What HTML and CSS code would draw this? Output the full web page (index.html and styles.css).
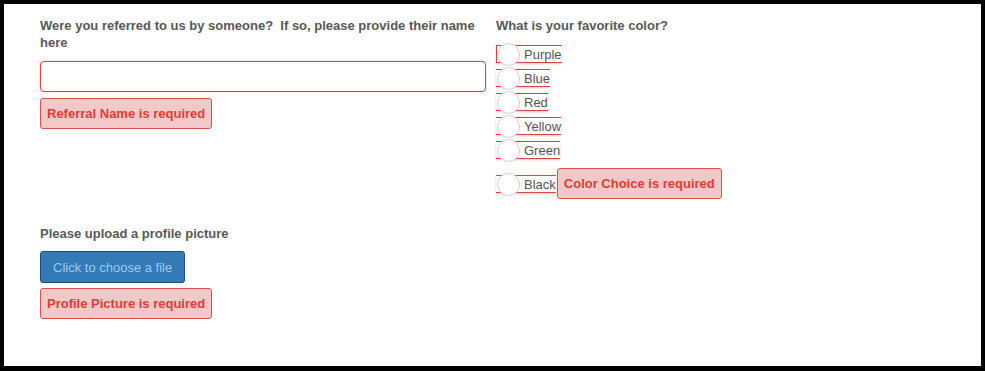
FILE: index.html
```html
<!DOCTYPE html>
<html lang="en">
<head>
<meta charset="utf-8">
<title>Form</title>
<link rel="stylesheet" href="styles.css">
</head>
<body>
<div class="frame">
  <form class="form">
    <div class="field">
      <label class="label">Were you referred to us by someone?&nbsp; If so, please provide their name here</label>
      <input class="text-input" type="text">
      <div class="error">Referral Name is required</div>
    </div>
    <div class="field">
      <div class="label">What is your favorite color?</div>
      <div class="options">
        <div class="row"><span class="opt first"><span class="dot"></span><span class="opt-text">Purple</span></span></div>
        <div class="row"><span class="opt"><span class="dot"></span><span class="opt-text">Blue</span></span></div>
        <div class="row"><span class="opt"><span class="dot"></span><span class="opt-text">Red</span></span></div>
        <div class="row"><span class="opt"><span class="dot"></span><span class="opt-text">Yellow</span></span></div>
        <div class="row"><span class="opt"><span class="dot"></span><span class="opt-text">Green</span></span></div>
        <div class="row last"><span class="opt"><span class="dot"></span><span class="opt-text">Black</span></span><div class="error">Color Choice is required</div></div>
      </div>
    </div>
    <div class="field">
      <div class="label">Please upload a profile picture</div>
      <div class="file-btn">Click to choose a file</div>
      <div class="error error-file">Profile Picture is required</div>
    </div>
  </form>
</div>
</body>
</html>
```
FILE: styles.css
```css
html, body {
  margin: 0;
  padding: 0;
  background: #000;
}
.frame {
  box-sizing: border-box;
  width: 985px;
  height: 371px;
  border-style: solid;
  border-color: #000;
  border-width: 4px 4px 5px 4px;
  background: #fff;
  padding: 13px 0 0 36px;
  font-family: "Liberation Sans", Arial, Helvetica, sans-serif;
  font-size: 13px;
  line-height: 17px;
  color: #555;
}
.form {
  display: grid;
  grid-template-columns: 446px 400px;
  column-gap: 10px;
  row-gap: 26px;
  align-items: start;
}
.field {
  display: flex;
  flex-direction: column;
  align-items: flex-start;
}
.label {
  display: block;
  font-weight: bold;
  color: #585858;
}
.text-input {
  box-sizing: border-box;
  width: 446px;
  height: 31px;
  margin: 10px 0 0 0;
  border: 1px solid #e0433d;
  border-radius: 4px;
  box-shadow: 0 0 2px rgba(224, 67, 61, 0.35);
  background: #fff;
  font: inherit;
  outline: none;
}
.error {
  box-sizing: border-box;
  margin-top: 6px;
  padding: 6px 6px;
  border: 1px solid #e0504b;
  border-radius: 3px;
  background: #f2c9c8;
  color: #e23b35;
  font-weight: bold;
  line-height: 17px;
  white-space: nowrap;
}
.options {
  margin-top: 8px;
  display: flex;
  flex-direction: column;
}
.row {
  height: 24px;
  display: flex;
  align-items: center;
}
.row.last {
  height: 31px;
  margin-top: 6px;
}
.row.last .error {
  margin-top: 0;
  margin-left: 1px;
}
.opt {
  box-sizing: border-box;
  height: 18px;
  display: inline-flex;
  align-items: flex-start;
  border-top: 1px solid #e0433d;
  border-bottom: 1px solid #e0433d;
  box-shadow: 0 1px 2px rgba(224, 67, 61, 0.3);
  padding-left: 1px;
}
.opt.first {
  border-left: 1px solid #e0433d;
  padding-left: 0;
}
.dot {
  box-sizing: border-box;
  width: 23px;
  height: 23px;
  margin-top: -3px;
  margin-bottom: -8px;
  border: 1px solid #cfcfcf;
  border-radius: 50%;
  background: #fff;
  flex: none;
}
.opt-text {
  padding-left: 4px;
  line-height: 17px;
  height: 16px;
  color: #555;
}
.file-btn {
  margin-top: 9px;
  padding: 7px 12px 6px 12px;
  border: 1px solid #1f4f7c;
  border-radius: 3px;
  background: #337ab7;
  color: #9ccbf0;
  line-height: 17px;
}
.error-file {
  margin-top: 5px;
}
```
